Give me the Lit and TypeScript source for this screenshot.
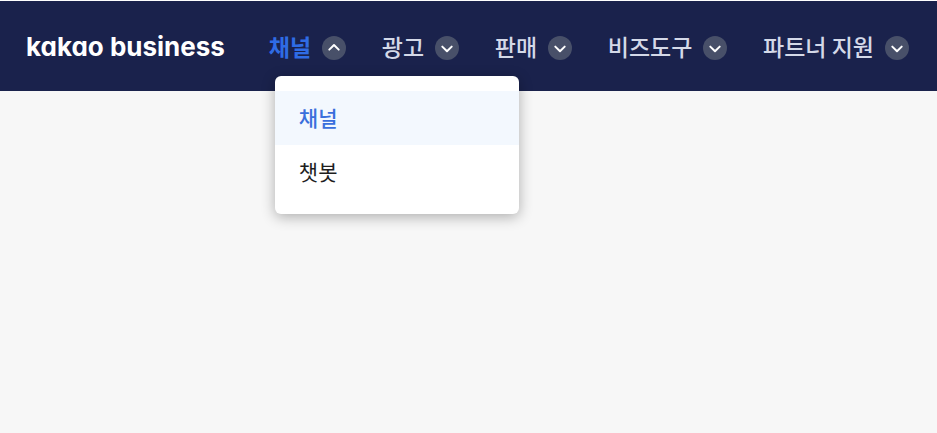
import { LitElement, html, css, svg } from "lit";
import { customElement, property, state } from "lit/decorators.js";
import { classMap } from "lit/directives/class-map.js";

interface MenuEntry {
  label: string;
  children?: string[];
}

const MENU: MenuEntry[] = [
  { label: "채널", children: ["채널", "챗봇"] },
  { label: "광고" },
  { label: "판매" },
  { label: "비즈도구" },
  { label: "파트너 지원" },
];

@customElement("nav-toggle")
export class NavToggle extends LitElement {
  @property() label = "";
  @property({ type: Boolean }) open = false;

  static styles = css`
    :host {
      display: block;
    }
    .toggle {
      display: flex;
      align-items: center;
      gap: 11px;
      padding: 0;
      border: 0;
      background: none;
      color: #d4d9e8;
      font: 500 23px/32px "Noto Sans CJK KR", sans-serif;
      white-space: nowrap;
      cursor: pointer;
    }
    .toggle.open {
      color: #2f6ce5;
      font-weight: 700;
    }
    .text {
      padding-bottom: 4px;
    }
    .badge {
      flex: none;
      width: 24px;
      height: 24px;
      border-radius: 50%;
      background: #485069;
    }
    .badge path {
      fill: none;
      stroke: #fff;
      stroke-width: 2;
      stroke-linecap: round;
      stroke-linejoin: round;
    }
  `;

  render() {
    return html`
      <button
        class=${classMap({ toggle: true, open: this.open })}
        aria-haspopup="true"
        aria-expanded=${this.open}
      >
        <span class="text">${this.label}</span>
        <svg class="badge" viewBox="0 0 24 24" aria-hidden="true">
          ${this.open
            ? svg`<path d="M7.3 13.6 L12 9 L16.7 13.6" />`
            : svg`<path d="M7.3 10.6 L12 15.2 L16.7 10.6" />`}
        </svg>
      </button>
    `;
  }
}

@customElement("app-root")
export class AppRoot extends LitElement {
  @state() private active = 0;

  static styles = css`
    :host {
      display: block;
      min-height: 100vh;
      box-sizing: border-box;
      border-top: 1px solid #fff;
      background: #f7f7f7;
      font-family: "Noto Sans CJK KR", sans-serif;
    }
    .header {
      display: flex;
      align-items: center;
      gap: 44px;
      box-sizing: border-box;
      height: 90px;
      padding: 4px 28px 0 26px;
      background: #1a224c;
    }
    .logo {
      padding-bottom: 2px;
      color: #fff;
      font: 700 26px/32px Inter, sans-serif;
      font-feature-settings: "cv11";
      text-decoration: none;
      white-space: nowrap;
    }
    .nav {
      flex: 1;
    }
    .menu {
      display: flex;
      justify-content: space-between;
      margin: 0;
      padding: 0;
      list-style: none;
    }
    .item {
      position: relative;
    }
    .dropdown {
      position: absolute;
      top: calc(100% + 10px);
      left: 6px;
      z-index: 1;
      width: 244px;
      box-sizing: border-box;
      margin: 0;
      padding: 15px 0;
      border-radius: 6px;
      background: #fff;
      box-shadow: 0 3px 14px rgba(0, 0, 0, 0.3);
      list-style: none;
    }
    .link {
      display: block;
      padding: 11px 24px 13px;
      color: #1e1e1e;
      font-size: 21px;
      line-height: 30px;
      text-decoration: none;
    }
    .link.current {
      background: #f3f8fe;
      color: #3a6fdc;
      font-weight: 500;
    }
  `;

  private renderDropdown(children: string[]) {
    return html`
      <ul class="dropdown">
        ${children.map(
          (name, i) => html`
            <li>
              <a class=${classMap({ link: true, current: i === 0 })} href="#">${name}</a>
            </li>
          `
        )}
      </ul>
    `;
  }

  render() {
    return html`
      <header class="header">
        <a class="logo" href="#">kakao business</a>
        <nav class="nav">
          <ul class="menu">
            ${MENU.map(
              (entry, i) => html`
                <li class="item">
                  <nav-toggle
                    .label=${entry.label}
                    .open=${i === this.active}
                    @click=${() => (this.active = i)}
                  ></nav-toggle>
                  ${i === this.active && entry.children
                    ? this.renderDropdown(entry.children)
                    : null}
                </li>
              `
            )}
          </ul>
        </nav>
      </header>
    `;
  }
}
